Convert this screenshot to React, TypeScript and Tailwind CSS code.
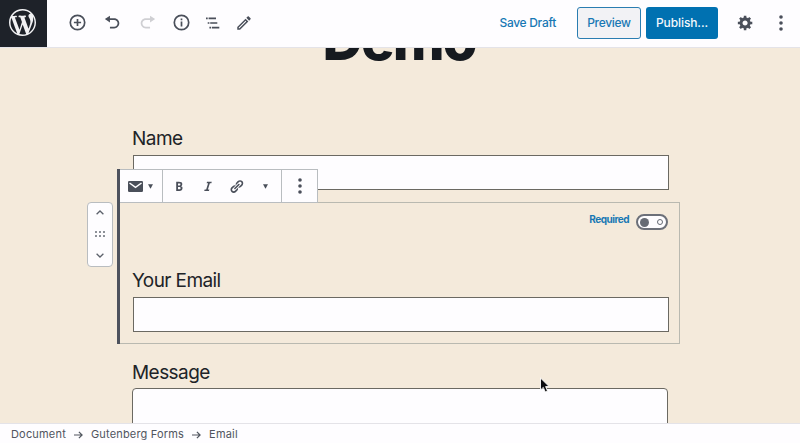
import type { ReactNode } from "react";

type IconProps = { d: string; size: number; className?: string; box?: string };

function Icon({ d, size, className = "", box = "0 0 20 20" }: IconProps) {
  return (
    <svg width={size} height={size} viewBox={box} fill="currentColor" className={`shrink-0 ${className}`} aria-hidden="true">
      <path d={d} />
    </svg>
  );
}

const WORDPRESS =
  "M20 10c0-5.51-4.49-10-10-10C4.48 0 0 4.49 0 10c0 5.52 4.48 10 10 10 5.51 0 10-4.48 10-10zM7.78 15.37L4.37 6.22c.55-.02 1.17-.08 1.17-.08.5-.06.44-1.13-.06-1.11 0 0-1.45.11-2.37.11-.18 0-.37 0-.58-.01C4.12 2.69 6.87 1.11 10 1.11c2.33 0 4.45.87 6.05 2.34-.68-.11-1.65.39-1.65 1.58 0 .74.45 1.36.9 2.1.35.61.55 1.36.55 2.46 0 1.49-1.4 5-1.4 5l-3.03-8.37c.54-.02.82-.17.82-.17.5-.05.44-1.25-.06-1.22 0 0-1.44.12-2.38.12-.87 0-2.33-.12-2.33-.12-.5-.03-.56 1.2-.06 1.22l.92.08 1.26 3.41zM17.41 10c.24-.64.74-1.87.43-4.25.7 1.29 1.05 2.71 1.05 4.25 0 3.29-1.73 6.24-4.4 7.78.97-2.59 1.94-5.2 2.92-7.78zM6.1 18.09C3.12 16.65 1.11 13.53 1.11 10c0-1.3.23-2.48.72-3.59C3.25 10.3 4.67 14.2 6.1 18.09zm4.03-6.63l2.58 6.98c-.86.29-1.76.45-2.71.45-.79 0-1.57-.11-2.29-.33.81-2.38 1.62-4.74 2.42-7.1z";
const UNDO = "M12 5H7V2L1 6l6 4V7h5c2.2 0 4 1.8 4 4s-1.8 4-4 4H7v2h5c3.3 0 6-2.7 6-6s-2.7-6-6-6z";
const REDO = "M8 5h5V2l6 4-6 4V7H8c-2.2 0-4 1.8-4 4s1.8 4 4 4h5v2H8c-3.3 0-6-2.7-6-6s2.7-6 6-6z";
const PENCIL =
  "M14.06 9.02l.92.92L5.92 19H5v-.92l9.06-9.06M17.66 3c-.25 0-.51.1-.7.29l-1.83 1.83 3.75 3.75 1.83-1.83c.39-.39.39-1.02 0-1.41l-2.34-2.34c-.2-.2-.45-.29-.71-.29zm-3.6 3.19L3 17.25V21h3.75L17.81 9.94l-3.75-3.75z";
const GEAR =
  "M18 12h-2.18c-.17.7-.44 1.35-.81 1.93l1.54 1.54-2.1 2.1-1.54-1.54c-.58.36-1.23.63-1.91.79V19H8v-2.18c-.68-.16-1.33-.43-1.91-.79l-1.54 1.54-2.12-2.12 1.54-1.54c-.36-.58-.63-1.23-.79-1.91H1V9.03h2.17c.16-.7.44-1.35.8-1.94L2.43 5.55l2.1-2.1 1.54 1.54c.58-.37 1.24-.64 1.93-.81V2h3v2.18c.68.16 1.33.43 1.91.79l1.54-1.54 2.12 2.12-1.54 1.54c.36.59.64 1.24.8 1.94H18V12zm-8.5 1.5c1.66 0 3-1.34 3-3s-1.34-3-3-3-3 1.34-3 3 1.34 3 3 3z";
const BOLD =
  "M6 4v13h4.54c1.37 0 2.46-.33 3.26-1 .8-.66 1.2-1.58 1.2-2.77 0-.84-.17-1.51-.51-2.01s-.9-.85-1.67-1.03v-.09c.57-.1 1.02-.4 1.36-.9s.51-1.13.51-1.91c0-1.14-.39-1.98-1.17-2.5C12.75 4.26 11.5 4 9.78 4H6zm2.57 5.15V6.26h1.36c.73 0 1.27.11 1.61.32.34.22.51.58.51 1.07 0 .54-.16.92-.47 1.15s-.82.35-1.51.35h-1.5zm0 2.19h1.6c1.44 0 2.16.53 2.16 1.61 0 .6-.17 1.05-.51 1.34s-.86.43-1.57.43H8.57v-3.38z";
const ITALIC = "M14.78 6h-2.13l-2.8 9h2.12l-.62 2H4.6l.62-2h2.14l2.8-9H8.03l.62-2h6.75z";
const LINK =
  "M17.74 2.76c1.68 1.69 1.68 4.41 0 6.1l-1.53 1.52c-1.12 1.12-2.7 1.47-4.14 1.09l2.62-2.61.76-.77.76-.76c.84-.84.84-2.2 0-3.04-.84-.85-2.2-.85-3.04 0l-.77.76-3.38 3.38c-.37-1.44-.02-3.02 1.1-4.14l1.52-1.53c1.69-1.68 4.42-1.68 6.1 0zM8.59 13.43l5.34-5.34c.42-.42.42-1.1 0-1.52-.44-.43-1.13-.39-1.53 0l-5.33 5.34c-.42.42-.42 1.1 0 1.52.44.43 1.13.39 1.52 0zm-.76 2.29l4.14-4.15c.38 1.44.03 3.02-1.09 4.14l-1.52 1.53c-1.69 1.68-4.41 1.68-6.1 0-1.68-1.68-1.68-4.42 0-6.1l1.53-1.52c1.12-1.12 2.7-1.47 4.14-1.1l-4.14 4.15c-.85.84-.85 2.2 0 3.05.84.84 2.2.84 3.04 0z";

function Dots({ className = "" }: { className?: string }) {
  return (
    <svg width="4" height="16" viewBox="0 0 4 16" fill="currentColor" className={className} aria-hidden="true">
      <circle cx="2" cy="2" r="1.8" />
      <circle cx="2" cy="8" r="1.8" />
      <circle cx="2" cy="14" r="1.8" />
    </svg>
  );
}

function Caret() {
  return (
    <svg width="5" height="5" viewBox="0 0 5 5" fill="currentColor" aria-hidden="true">
      <path d="M0 .3h5L2.5 4.7z" />
    </svg>
  );
}

function ToolButton({ label, children, className = "" }: { label: string; children: ReactNode; className?: string }) {
  return (
    <button aria-label={label} className={`flex items-center justify-center ${className}`}>
      {children}
    </button>
  );
}

function Header() {
  return (
    <header className="flex h-12 shrink-0 items-stretch border-b border-[#e4e3e8] bg-[#fefdff] text-[#4a4f5a]">
      <a className="flex h-[47px] w-[47px] items-center justify-center bg-[#1e2229] pr-[3px] pb-[2px] text-[#f1f1f3]">
        <Icon d={WORDPRESS} size={27} />
      </a>
      <div className="flex items-center pb-[2px] pl-[13px]">
        <ToolButton label="Add block" className="w-[35px]">
          <svg width="17" height="17" viewBox="0 0 17 17" fill="none" stroke="currentColor" strokeWidth="1.7">
            <circle cx="8.5" cy="8.5" r="7.2" />
            <path d="M8.5 4.9v7.2M4.9 8.5h7.2" />
          </svg>
        </ToolButton>
        <ToolButton label="Undo" className="w-[35px]">
          <Icon d={UNDO} size={17} />
        </ToolButton>
        <ToolButton label="Redo" className="w-[35px] text-[#cfcfd3]">
          <Icon d={REDO} size={17} />
        </ToolButton>
        <ToolButton label="Content structure" className="w-[33px]">
          <svg width="17" height="17" viewBox="0 0 17 17" fill="none" stroke="currentColor" strokeWidth="1.7">
            <circle cx="8.5" cy="8.5" r="7.2" />
            <path d="M8.5 7.4v5M8.5 4.5v1.7" />
          </svg>
        </ToolButton>
        <ToolButton label="Block navigation" className="w-[30px]">
          <svg width="14" height="12" viewBox="0 0 14 12" fill="none" stroke="currentColor" strokeWidth="1.7">
            <path d="M0 1.3h1.7M2.600 1.3h7.400M1.7 6h1.7M4.200 6h7.100M3.4 10.6h1.7M5.900 10.6h7.400" />
          </svg>
        </ToolButton>
        <ToolButton label="Edit mode" className="w-[32px]">
          <Icon d={PENCIL} size={18} box="0 0 24 24" />
        </ToolButton>
      </div>
      <div className="ml-auto flex items-center pb-[2px] text-[12px] font-medium tracking-[-0.3px]">
        <button className="text-[#1878b4]">Save Draft</button>
        <button className="ml-[21px] h-8 w-16 rounded-[3px] border border-[#2a7db1] bg-[#f2f2f5] text-[#1878b4]">Preview</button>
        <button className="ml-[5px] h-8 w-[72px] rounded-[3px] bg-[#0071b1] tracking-[-0.1px] text-[#f3f8fc]">Publish...</button>
        <ToolButton label="Settings" className="ml-[19px] w-[17px]">
          <Icon d={GEAR} size={17} />
        </ToolButton>
        <ToolButton label="More tools" className="mr-[17px] ml-[25px] w-1">
          <Dots />
        </ToolButton>
      </div>
    </header>
  );
}

function BlockToolbar() {
  return (
    <div className="absolute -top-[34px] -left-px flex h-[34px] w-[199px] items-stretch border border-[#b9bdc0] bg-[#fefdff] text-[#4a4f5a]">
      <div className="flex w-[43px] items-center gap-[5px] border-r border-[#b9bdc0] pl-[8px]">
        <svg width="15" height="11" viewBox="0 0 15 11" aria-hidden="true">
          <rect width="15" height="11" rx="1.2" fill="currentColor" />
          <path d="M1.5 2l6 4.4L13.500 2" fill="none" stroke="#fefdff" strokeWidth="1.5" />
        </svg>
        <Caret />
      </div>
      <div className="flex w-[119px] items-center border-r border-[#b9bdc0]">
        <ToolButton label="Bold" className="w-[31px]">
          <Icon d={BOLD} size={14} />
        </ToolButton>
        <ToolButton label="Italic" className="w-[28px]">
          <Icon d={ITALIC} size={14} />
        </ToolButton>
        <ToolButton label="Link" className="w-[29px]">
          <Icon d={LINK} size={15} />
        </ToolButton>
        <ToolButton label="More rich text controls" className="w-[29px]">
          <Caret />
        </ToolButton>
      </div>
      <ToolButton label="More options" className="flex-1">
        <Dots />
      </ToolButton>
    </div>
  );
}

function Mover() {
  return (
    <div className="flex h-[65px] w-[26px] flex-col items-center justify-between rounded-[4px] border border-[#b9bdc0] bg-[#fefdff] pt-[7px] pb-[8px] text-[#5d626c]">
      <svg width="8" height="5" viewBox="0 0 8 5" fill="none" stroke="currentColor" strokeWidth="1.3">
        <path d="M.6 4.300L4 1l3.400 3.300" />
      </svg>
      <svg width="10" height="6" viewBox="0 0 10 6" fill="currentColor">
        {[1, 5, 9].map((x) => (
          <g key={x}>
            <circle cx={x} cy="1" r=".95" />
            <circle cx={x} cy="5" r=".95" />
          </g>
        ))}
      </svg>
      <svg width="8" height="5" viewBox="0 0 8 5" fill="none" stroke="currentColor" strokeWidth="1.3">
        <path d="M.6.7L4 4l3.400-3.300" />
      </svg>
    </div>
  );
}

function Canvas() {
  return (
    <main className="relative min-h-0 flex-1 overflow-hidden bg-[#f4eadb] text-[#202327]">
      <h1 className="-mt-[41px] h-[66px] pr-[2px] text-center text-[56px] leading-[66px] font-extrabold tracking-[-1.9px] text-[#161a1f]">
        Demo
      </h1>
      <div className="mt-[54px] ml-[132px] w-[537px]">
        <label className="block h-[28px] text-[19px] leading-[24px] tracking-[-0.55px]">Name</label>
        <div className="ml-px h-[35px] border border-[#6b6962] bg-[#fefdff]" />
      </div>
      <section className="mt-[12px] ml-[87px] flex items-start gap-[5px]">
        <Mover />
        <div className="relative h-[142px] w-[562px] border border-l-0 border-[#b9b9b0]">
          <div className="absolute -top-[34px] -left-px z-10 h-[175px] w-[3px] bg-[#4d525d]" />
          <div className="pl-[2px]">
            <div className="relative">
              <BlockToolbar />
            </div>
            <div className="flex h-[66px] items-start justify-end pt-[10px] pr-[11px]">
              <span className="-mt-px mr-[7px] text-[10px] leading-[14px] font-bold tracking-[-0.5px] text-[#1878b4]">Required</span>
              <span className="mt-px flex h-[16px] w-[32px] items-center justify-between rounded-full border-2 border-[#6c7079] bg-[#fefdff] pr-[3px] pl-[2px]">
                <span className="size-[9px] rounded-full bg-[#666b74]" />
                <span className="size-[6px] rounded-full border border-[#666b74]" />
              </span>
            </div>
            <div className="w-[549px] pl-[12px]">
              <label className="block h-[28px] text-[19px] leading-[24px] tracking-[-0.6px]">Your Email</label>
              <div className="ml-px h-[35px] border border-[#6b6962] bg-[#fefdff]" />
            </div>
          </div>
        </div>
      </section>
      <div className="mt-[17px] ml-[132px] w-[536px]">
        <label className="block h-[27px] text-[19px] leading-[24px] tracking-[-0.55px]">Message</label>
        <div className="h-[70px] rounded-[4px] border border-[#6b6962] bg-[#fefdff]" />
      </div>
      <svg className="absolute top-[329px] left-[539px]" width="11" height="17" viewBox="0 0 11 17" aria-hidden="true">
        <path d="M1.500 1v12l2.800-2.600 1.900 4.500 2.300-1-1.900-4.300h3.600z" fill="#0b0b0d" stroke="#fff" strokeWidth=".9" />
      </svg>
    </main>
  );
}

function Arrow() {
  return (
    <svg width="9" height="8" viewBox="0 0 9 8" fill="none" stroke="currentColor" strokeWidth="1.2" aria-hidden="true">
      <path d="M0 4h8M4.900.8L8.100 4 4.900 7.200" />
    </svg>
  );
}

export default function App() {
  return (
    <div className="flex h-[443px] w-[800px] flex-col overflow-hidden font-['Inter',sans-serif]">
      <Header />
      <Canvas />
      <footer className="flex h-[20px] shrink-0 items-center gap-[8px] border-t border-[#e4e3e8] bg-[#fefdff] pt-[2px] pl-[11px] text-[11px] tracking-[0.18px] text-[#50555e]">
        <span>Document</span>
        <Arrow />
        <span>Gutenberg Forms</span>
        <Arrow />
        <span>Email</span>
      </footer>
    </div>
  );
}
